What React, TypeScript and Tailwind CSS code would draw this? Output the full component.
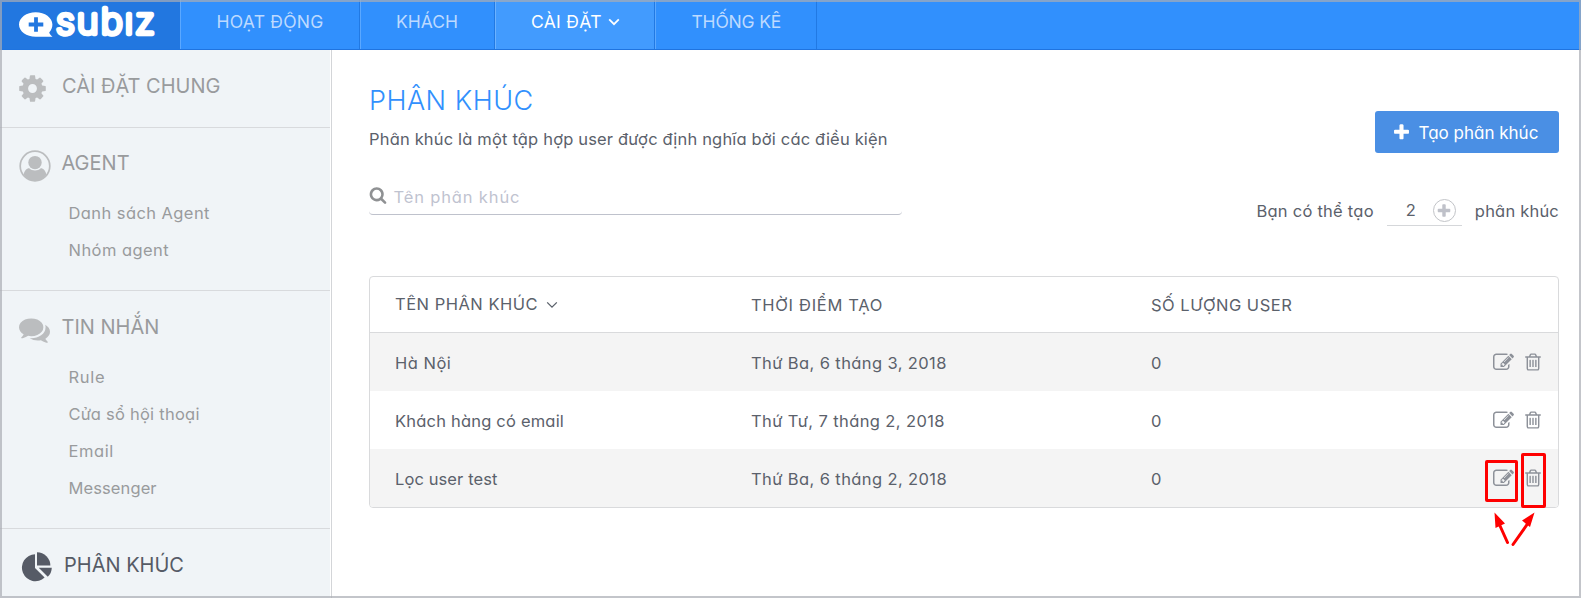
import type { ReactNode } from "react";

const P = {
  edit: "M888 1184l116-116-152-152-116 116v56h96v96h56zm440-720q-16-16-33 1l-350 350q-17 17-1 33t33-1l350-350q17-17 1-33zm80 594v190q0 119-84.5 203.5t-203.5 84.5h-832q-119 0-203.5-84.5t-84.5-203.5v-832q0-119 84.5-203.5t203.5-84.5h832q63 0 117 25 15 7 18 23 3 17-9 29l-49 49q-14 14-32 8-23-6-45-6h-832q-66 0-113 47t-47 113v832q0 66 47 113t113 47h832q66 0 113-47t47-113v-126q0-13 9-22l64-64q15-15 35-7t20 29zm-96-738l288 288-672 672h-288v-288zm444 132l-92 92-288-288 92-92q28-28 68-28t68 28l152 152q28 28 28 68t-28 68z",
  trash: "M704 736v576q0 14-9 23t-23 9h-64q-14 0-23-9t-9-23v-576q0-14 9-23t23-9h64q14 0 23 9t9 23zm256 0v576q0 14-9 23t-23 9h-64q-14 0-23-9t-9-23v-576q0-14 9-23t23-9h64q14 0 23 9t9 23zm256 0v576q0 14-9 23t-23 9h-64q-14 0-23-9t-9-23v-576q0-14 9-23t23-9h64q14 0 23 9t9 23zm128 724v-948h-896v948q0 22 7 40.5t14.5 27 10.5 8.5h832q3 0 10.5-8.5t14.5-27 7-40.5zm-672-1076h448l-48-117q-7-9-17-11h-317q-10 2-17 11zm928 32v64q0 14-9 23t-23 9h-96v948q0 83-47 143.5t-113 60.5h-832q-66 0-113-58.5t-47-141.5v-952h-96q-14 0-23-9t-9-23v-64q0-14 9-23t23-9h309l70-167q15-37 54-63t79-26h320q40 0 79 26t54 63l70 167h309q14 0 23 9t9 23z",
  cog: "M1152 896q0-106-75-181t-181-75-181 75-75 181 75 181 181 75 181-75 75-181zm512-109v222q0 12-8 23t-20 13l-185 28q-19 54-39 91 35 50 107 138 10 12 10 25t-9 23q-27 37-99 108t-94 71q-12 0-26-9l-138-108q-44 23-91 38-16 136-29 186-7 28-36 28h-222q-14 0-24.5-8.5t-11.5-21.5l-28-184q-49-16-90-37l-141 107q-10 9-25 9-14 0-25-11-126-114-165-168-7-10-7-23 0-12 8-23 15-21 51-66.5t54-70.5q-27-50-41-99l-183-27q-13-2-21-12.5t-8-23.5v-222q0-12 8-23t19-13l186-28q14-46 39-92-40-57-107-138-10-12-10-24 0-10 9-23 26-36 98.5-107.5t94.5-71.5q13 0 26 10l138 107q44-23 91-38 16-136 29-186 7-28 36-28h222q14 0 24.5 8.5t11.5 21.5l28 184q49 16 90 37l142-107q9-9 24-9 13 0 25 10 129 119 165 170 7 8 7 22 0 12-8 23-15 21-51 66.5t-54 70.5q26 50 41 98l183 28q13 2 21 12.5t8 23.5z",
  comments: "M1408 768q0 139-94 257t-256.5 186.5-353.5 68.5q-86 0-176-16-124 88-278 128-36 9-86 16h-3q-11 0-20.5-8t-11.5-21q-1-3-1-6.5t.5-6.5 2-6l2.5-5 3.5-5.5 4-5 4.5-5 4-4.5q5-6 23-25t26-29.5 22.5-29 25-38.5 20.5-44q-124-72-195-177t-71-224q0-139 94-257t256.5-186.5 353.5-68.5 353.5 68.5 256.5 186.5 94 257zm384 256q0 120-71 224.5t-195 176.5q10 24 20.5 44t25 38.5 22.5 29 26 29.5 23 25q1 1 4 4.5t4.5 5 4 5 3.5 5.5l2.5 5 2 6 .5 6.5-1 6.5q-3 14-13 22t-22 7q-50-7-86-16-154-40-278-128-90 16-176 16-271 0-472-132 58 4 88 4 161 0 309-45t264-129q125-92 192-212t67-254q0-77-23-152 129 71 204 178t75 230z",
  search: "M1216 832q0-185-131.5-316.5t-316.5-131.5-316.5 131.5-131.5 316.5 131.5 316.5 316.5 131.5 316.5-131.5 131.5-316.5zm512 832q0 52-38 90t-90 38q-54 0-90-38l-343-342q-179 124-399 124-143 0-273.5-55.5t-225-150-150-225-55.5-273.5 55.5-273.5 150-225 225-150 273.5-55.5 273.5 55.5 225 150 150 225 55.5 273.5q0 220-124 399l343 343q37 37 37 90z",
  plus: "M1600 736v192q0 40-28 68t-68 28h-416v416q0 40-28 68t-68 28h-192q-40 0-68-28t-28-68v-416h-416q-40 0-68-28t-28-68v-192q0-40 28-68t68-28h416v-416q0-40 28-68t68-28h192q40 0 68 28t28 68v416h416q40 0 68 28t28 68z",
};

function Icon({ d, className }: { d: string; className: string }) {
  return (
    <svg viewBox="0 0 1792 1792" fill="currentColor" className={"shrink-0 " + className}>
      <path d={d} />
    </svg>
  );
}

function Chevron({ className }: { className: string }) {
  return (
    <svg viewBox="0 0 12 8" fill="none" stroke="currentColor" className={"shrink-0 " + className}>
      <path d="M1.2 1.4 6 6.2l4.8-4.8" />
    </svg>
  );
}

function Logo() {
  return (
    <svg viewBox="0 0 180 49" className="h-[49px] w-[180px]">
      <path
        fill="#fff"
        d="M35.7 12.2c-9.2 0-16.7 5.5-16.7 12.3s7.5 12.3 16.7 12.3h16.8c-1.6-1.3-2.7-2.7-3.3-4.3 2-2.1 3.2-4.9 3.2-8 0-6.8-7.5-12.3-16.7-12.3Z"
      />
      <path d="M36 17.2v14.6M28.7 24.5h14.6" stroke="#2277e0" strokeWidth="3.8" />
      <text
        x="56"
        y="34.4"
        textLength="101"
        lengthAdjust="spacingAndGlyphs"
        fill="#fff"
        stroke="#fff"
        strokeWidth="4.4"
        strokeLinejoin="round"
        className="font-[Inter] text-[35.5px] font-extralight tracking-[2px]"
      >
        subız
      </text>
    </svg>
  );
}

function AgentIcon() {
  return (
    <svg viewBox="0 0 32 32" className="h-8 w-8 shrink-0">
      <circle cx="16" cy="16" r="14.8" fill="none" stroke="currentColor" strokeWidth="1.7" />
      <circle cx="16" cy="12.6" r="6.7" fill="currentColor" />
      <path
        fill="currentColor"
        d="M4.6 24.5c.8-3.6 2.9-6.3 5.6-6.3 1.6 1.3 3.5 2.3 5.8 2.3s4.2-1 5.8-2.3c2.7 0 4.8 2.7 5.6 6.3-2.3 3.6-6.5 6.5-11.4 6.5S6.900 28.100 4.600 24.500Z"
      />
    </svg>
  );
}

function PieIcon() {
  return (
    <svg viewBox="0 0 32 32" fill="currentColor" className="h-8 w-8 shrink-0">
      <path d="M14 3.2V17l9.6 9.6A13.5 13.5 0 1 1 14 3.2Z" />
      <path d="M16 1.2A13.5 13.5 0 0 1 29.4 14.6H16Z" />
      <path d="M17.7 16.8h13.1a13 13 0 0 1-4 9Z" />
    </svg>
  );
}

const GROUPS: { icon: ReactNode; title: string; items: ReactNode[] }[] = [
  {
    icon: <AgentIcon />,
    title: "AGENT",
    items: [<span className="tracking-[0.42px]">Danh sách Agent</span>, <span className="tracking-[0.45px]">Nhóm agent</span>],
  },
  {
    icon: <Icon d={P.comments} className="h-[31px] w-[31px]" />,
    title: "TIN NHẮN",
    items: [
      <span className="tracking-[0.7px]">Rule</span>,
      <span className="tracking-[0.25px]">Cửa sổ hội thoại</span>,
      <span className="tracking-[0.6px]">Email</span>,
      <span className="tracking-[0.1px]">Messenger</span>,
    ],
  },
];

const ROWS = [
  { name: <span className="tracking-[0.5px]">Hà Nội</span>, date: "Thứ Ba, 6 tháng 3, 2018" },
  { name: <span className="tracking-[0.2px]">Khách hàng có email</span>, date: "Thứ Tư, 7 tháng 2, 2018" },
  { name: <span className="tracking-[0.1px]">Lọc user test</span>, date: "Thứ Ba, 6 tháng 2, 2018" },
];

export default function App() {
  return (
    <div className="relative flex h-[598px] w-[1581px] flex-col overflow-hidden bg-white font-[Inter,'Noto_Sans',sans-serif] text-[16.5px] font-normal text-[#5b616b] [font-feature-settings:'cv11']">
      <header className="flex h-[50px] shrink-0 border-b border-[#1f74e0] bg-[#3190fd] text-[17.5px] leading-[44px] text-[#bddaff]">
        <div className="w-[180px] bg-[#2277e0]">
          <Logo />
        </div>
        <nav className="flex">
          <a className="w-[180px] border-x border-l-[#5ba8ff] border-r-[#2179e3] pl-[35.5px] tracking-[0.25px]">HOẠT ĐỘNG</a>
          <a className="w-[135px] border-x border-l-[#5ba8ff] border-r-[#2179e3] pl-[35px]">KHÁCH</a>
          <a className="flex w-[160px] items-start border-x border-l-[#6cb2ff] border-r-[#2179e3] bg-[#429bfe] pl-[35px] text-white">
            <span className="tracking-[0.3px]">CÀI ĐẶT</span>
            <Chevron className="mt-[18px] ml-[6px] h-[8px] w-[12px] stroke-[1.8]" />
          </a>
          <a className="w-[162px] border-x border-l-[#5ba8ff] border-r-[#2179e3] pl-[35.5px] tracking-[-0.2px]">THỐNG KÊ</a>
        </nav>
      </header>

      <div className="flex min-h-0 grow">
        <aside className="w-[332px] shrink-0 border-r border-[#d3d5d8] pr-px text-[#999b9d]">
          <div className="h-full bg-[#f0f4f7]">
            <div className="flex h-[78px] border-b border-[#d8dadd] pt-[18px] pl-[17px]">
              <div className="w-[45px] pt-[5px] text-[#bbbdbf]">
                <Icon d={P.cog} className="h-[31px] w-[31px]" />
              </div>
              <span className="text-[20px] leading-[37px]">CÀI ĐẶT CHUNG</span>
            </div>
            {GROUPS.map((g, i) => (
              <div key={i} className={i === 0 ? "h-[163px] border-b border-[#d8dadd] pt-[17px]" : "h-[238px] border-b border-[#d8dadd] pt-[17px]"}>
                <div className="flex h-[38px] pl-[18.5px]">
                  <div className={i === 0 ? "w-[43px] pt-[5px] text-[#bbbdbf]" : "w-[43px] pt-[6px] text-[#bbbdbf]"}>{g.icon}</div>
                  <div className={i === 0 ? "text-[20px] leading-[37px]" : "text-[20px] leading-[38px]"}>{g.title}</div>
                </div>
                <ul className={i === 0 ? "mt-[12px] pl-[68.5px] leading-[37px]" : "mt-[13px] pl-[68.5px] leading-[37px]"}>
                  {g.items.map((t, j) => (
                    <li key={j}>{t}</li>
                  ))}
                </ul>
              </div>
            ))}
            <div className="flex pt-[17px] pl-[21px] text-[#565b66]">
              <div className="w-[43px] pt-[5px]">
                <PieIcon />
              </div>
              <span className="text-[20px] leading-[38px]">PHÂN KHÚC</span>
            </div>
          </div>
        </aside>

        <main className="grow pr-[22px] pl-[37px]">
          <div className="flex h-[226px] justify-between">
            <div className="w-[533px] pt-[32px]">
              <h1 className="text-[27px] leading-[38px] font-light tracking-[0.5px] text-[#3190fd]">PHÂN KHÚC</h1>
              <p className="mt-[3px] leading-[32px] tracking-[0.17px] whitespace-nowrap">
                Phân khúc là một tập hợp user được định nghĩa bởi các điều kiện
              </p>
              <div className="mt-[23px] flex h-[37px] items-center rounded-[4px] border-b border-[#bfc2cc]">
                <Icon d={P.search} className="mb-[3px] h-[18px] w-[18px] text-[#8f9193]" />
                <span className="mt-[2px] ml-[6.5px] tracking-[0.85px] text-[#bfc3d0]">Tên phân khúc</span>
              </div>
            </div>
            <div className="flex flex-col items-end pt-[61px]">
              <button className="flex h-[42px] w-[184px] items-center rounded-[3px] bg-[#4a8fe4] pl-[17px] text-[17px] text-white">
                <Icon d={P.plus} className="h-[19px] w-[19px]" />
                <span className="mt-[3px] ml-[7.5px]">Tạo phân khúc</span>
              </button>
              <div className="mt-[43px] flex h-[30px] items-center">
                <span className="tracking-[0.25px]">Bạn có thể tạo</span>
                <div className="mx-[13px] flex h-[30px] w-[75px] items-center border-b border-[#d5d7da] pl-[19px]">
                  <span>2</span>
                  <div className="ml-[17px] flex h-[23px] w-[23px] items-center justify-center rounded-full border border-[#c2c4c8] text-[#bfc1c9]">
                    <Icon d={P.plus} className="h-[16px] w-[16px]" />
                  </div>
                </div>
                <span className="tracking-[0.2px]">phân khúc</span>
              </div>
            </div>
          </div>

          <div className="h-[232px] overflow-hidden rounded-[4px] border border-[#d9dadc]">
            <div className="grid h-[56px] grid-cols-[356px_400px_1fr] border-b border-[#d9dadc] pl-[25px] leading-[57px]">
              <div className="flex items-start leading-[54px]">
                <span className="tracking-[0.5px]">TÊN PHÂN KHÚC</span>
                <Chevron className="mt-[24px] ml-[8px] h-[8px] w-[12px] stroke-[1.3]" />
              </div>
              <div className="tracking-[0.7px]">THỜI ĐIỂM TẠO</div>
              <div className="tracking-[0.5px]">SỐ LƯỢNG USER</div>
            </div>
            {ROWS.map((r, i) => (
              <div key={i} className="grid h-[58px] grid-cols-[356px_400px_1fr_auto] pl-[25px] leading-[60px] odd:bg-white even:bg-[#f4f4f4]">
                <div>{r.name}</div>
                <div className="tracking-[0.39px]">{r.date}</div>
                <div>0</div>
                <div className="flex gap-[9.5px] pt-[18.5px] pr-[15px] text-[#8d9199]">
                  <Icon d={P.edit} className="h-[21px] w-[21px]" />
                  <Icon d={P.trash} className="h-[20px] w-[20px]" />
                </div>
              </div>
            ))}
          </div>
        </main>
      </div>

      <svg viewBox="0 0 70 100" fill="none" className="absolute top-[450px] left-[1480px] h-[100px] w-[70px]">
        <g stroke="#fe0000" strokeWidth="3">
          <rect x="6.5" y="11.5" width="30" height="39" rx="0.5" />
          <rect x="42.5" y="4.5" width="22" height="52" rx="0.5" />
          <path d="m27.5 92.5-9-20M33 94.5l15.5-22" strokeLinecap="round" />
        </g>
        <path fill="#fe0000" d="M14.5 62.5 25 73.5l-9.5 4.5ZM54.5 62.5 42 70.5l8 6.5Z" />
      </svg>
      <div className="pointer-events-none absolute inset-0 border-2 border-[#a9adb3]/70" />
    </div>
  );
}
